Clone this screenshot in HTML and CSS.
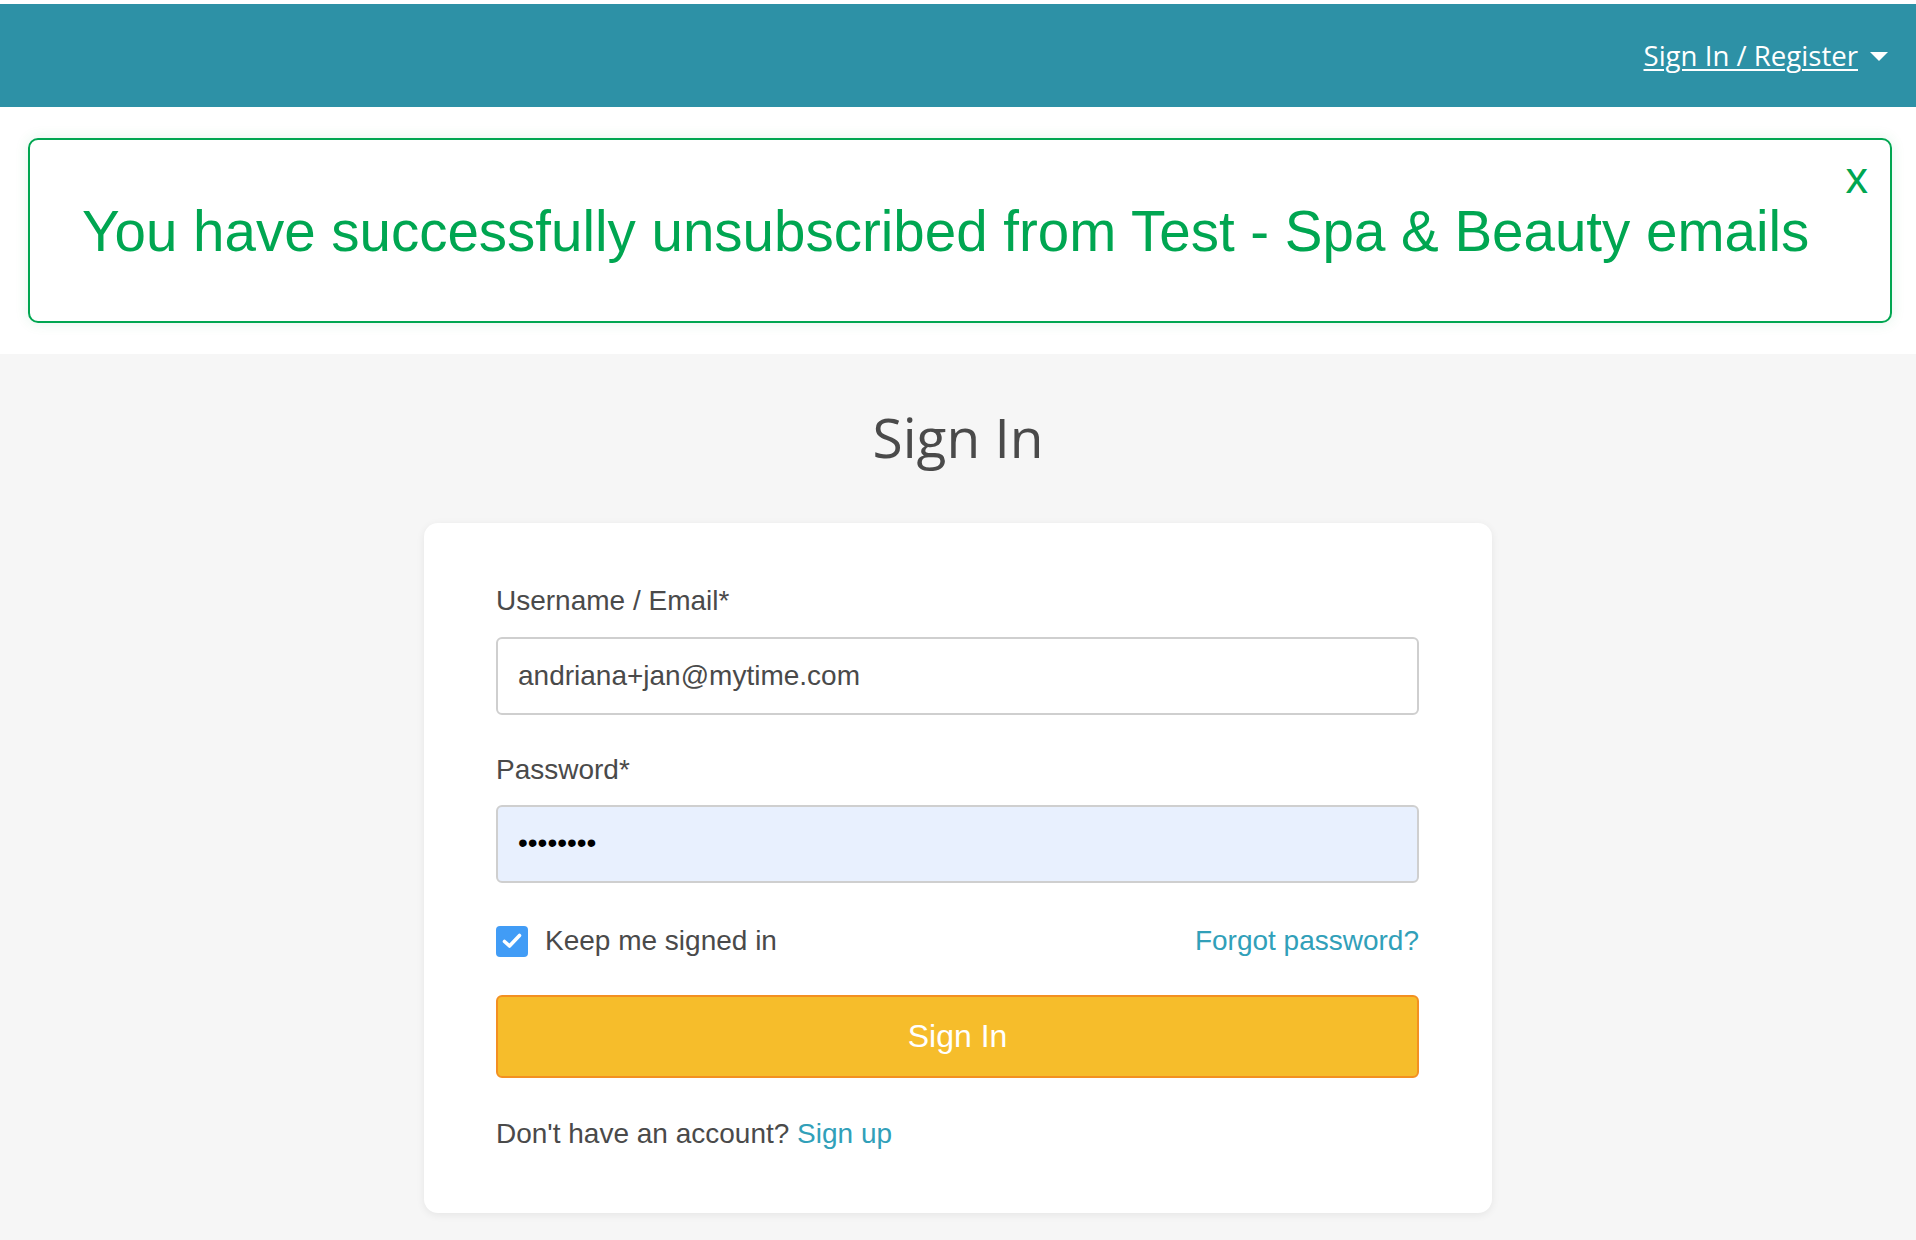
FILE: index.html
```html
<!DOCTYPE html>
<html lang="en">
<head>
<meta charset="utf-8">
<title>Sign In</title>
<link rel="stylesheet" href="styles.css">
</head>
<body>
<header class="topbar">
  <a class="account-link" href="#">Sign In / Register</a>
  <svg class="caret" width="18" height="9" viewBox="0 0 18 9"><path d="M0 0 L18 0 L9 9 Z" fill="#fff"/></svg>
</header>

<section class="notice-area">
  <div class="notice">
    <p class="notice-text">You have successfully unsubscribed from Test - Spa &amp; Beauty emails</p>
    <span class="notice-close">x</span>
  </div>
</section>

<main class="main">
  <h1 class="title">Sign In</h1>
  <form class="card">
    <label class="label">Username / Email*</label>
    <div class="input">andriana+jan@mytime.com</div>
    <label class="label label-gap">Password*</label>
    <div class="input input-filled"><span class="dots">••••••••</span></div>
    <div class="options">
      <div class="keep">
        <span class="checkbox">
          <svg width="20" height="16" viewBox="0 0 20 16"><path d="M2.5 8.5 L7.5 13 L17.5 2.5" fill="none" stroke="#fff" stroke-width="3.6" stroke-linecap="round" stroke-linejoin="round"/></svg>
        </span>
        <span class="keep-text">Keep me signed in</span>
      </div>
      <a class="link" href="#">Forgot password?</a>
    </div>
    <div class="button">Sign In</div>
    <p class="signup">Don't have an account? <a class="link" href="#">Sign up</a></p>
  </form>
</main>
</body>
</html>
```
FILE: styles.css
```css
* { box-sizing: border-box; }

html, body {
  margin: 0;
  padding: 0;
  background: #f6f6f6;
}

body {
  padding-top: 4px;
  background: #ffffff;
  font-family: "Liberation Sans", Arial, sans-serif;
  color: #4a4a4a;
  min-height: 1240px;
}

.topbar {
  height: 103px;
  background: #2d91a6;
  display: flex;
  justify-content: flex-end;
  align-items: center;
  padding-right: 28px;
  gap: 12px;
}

.account-link {
  font-family: "Open Sans", sans-serif;
  font-size: 27.6px;
  line-height: 38px;
  color: #ffffff;
  text-decoration: underline;
  text-decoration-thickness: 2px;
  text-underline-offset: 3px;
  margin-top: -2px;
}

.caret { display: block; margin-top: 1px; }

.notice-area {
  background: #ffffff;
  padding: 31px 24px 31px 28px;
}

.notice {
  position: relative;
  height: 185px;
  border: 2px solid #00a651;
  border-radius: 10px;
  background: #fff;
  box-shadow: 0 0 14px rgba(0, 166, 81, 0.12);
  display: flex;
  align-items: center;
  padding: 0 52px;
}

.notice-text {
  margin: 0;
  font-size: 56.5px;
  line-height: 64px;
  color: #00a651;
  padding-top: 2px;
}

.notice-close {
  position: absolute;
  top: 13px;
  right: 22px;
  font-size: 45px;
  line-height: 50px;
  color: #00a651;
}

.main {
  background: #f6f6f6;
  padding: 45px 0 29px;
}

.title {
  margin: 0 0 48px;
  text-align: center;
  font-family: "Open Sans", sans-serif;
  font-weight: 400;
  font-size: 55px;
  line-height: 76px;
  color: #4a4a4a;
}

.card {
  width: 1068px;
  margin: 0 auto;
  background: #ffffff;
  border-radius: 14px;
  box-shadow: 0 2px 8px rgba(0, 0, 0, 0.07);
  padding: 61px 73px 62px 72px;
  display: flex;
  flex-direction: column;
}

.label {
  display: block;
  font-size: 28px;
  line-height: 34px;
  color: #4a4a4a;
}

.label-gap { margin-top: 38px; }

.input {
  margin-top: 19px;
  height: 78px;
  border: 2px solid #cfcfcf;
  border-radius: 6px;
  background: #fff;
  display: flex;
  align-items: center;
  padding: 0 20px;
  font-size: 28px;
  line-height: 34px;
  color: #4a4a4a;
}

.input-filled {
  background: #e8f0fe;
  margin-top: 18px;
}

.dots {
  font-family: "Liberation Sans", Arial, sans-serif;
  font-size: 28px;
  color: #000;
  margin-top: -3px;
}

.options {
  margin-top: 41px;
  display: flex;
  justify-content: space-between;
  align-items: center;
  height: 34px;
}

.keep {
  display: flex;
  align-items: center;
  gap: 17px;
}

.checkbox {
  width: 32px;
  height: 31px;
  border-radius: 4px;
  background: #419cf6;
  display: flex;
  align-items: center;
  justify-content: center;
}

.checkbox svg { display: block; }

.keep-text {
  font-size: 28px;
  line-height: 34px;
  color: #4a4a4a;
}

.link {
  color: #31a0b9;
  text-decoration: none;
  font-size: 28px;
  line-height: 34px;
}

.button {
  margin-top: 37px;
  height: 83px;
  background: #f6bd2b;
  border: 2px solid #f39021;
  border-radius: 6px;
  color: #ffffff;
  font-size: 32px;
  display: flex;
  align-items: center;
  justify-content: center;
}

.signup {
  margin: 39px 0 0;
  font-size: 28px;
  line-height: 34px;
  color: #4a4a4a;
}
```
